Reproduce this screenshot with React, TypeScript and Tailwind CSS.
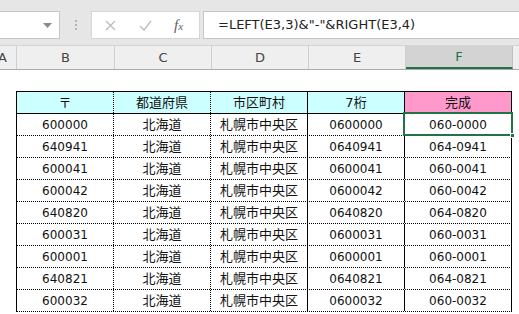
const ROWS: [string, string, string, string, string][] = [
  ["600000", "北海道", "札幌市中央区", "0600000", "060-0000"],
  ["640941", "北海道", "札幌市中央区", "0640941", "064-0941"],
  ["600041", "北海道", "札幌市中央区", "0600041", "060-0041"],
  ["600042", "北海道", "札幌市中央区", "0600042", "060-0042"],
  ["640820", "北海道", "札幌市中央区", "0640820", "064-0820"],
  ["600031", "北海道", "札幌市中央区", "0600031", "060-0031"],
  ["600001", "北海道", "札幌市中央区", "0600001", "060-0001"],
  ["640821", "北海道", "札幌市中央区", "0640821", "064-0821"],
  ["600032", "北海道", "札幌市中央区", "0600032", "060-0032"],
];

const COLS = [
  { key: "B", w: "w-[98px]" },
  { key: "C", w: "w-[97px]" },
  { key: "D", w: "w-[97px]" },
  { key: "E", w: "w-[97px]" },
  { key: "F", w: "w-[107px]" },
];

// right border style per column (B|C and C|D are dotted, rest solid)
const RIGHT = [
  "border-r border-dotted border-r-black",
  "border-r border-dotted border-r-black",
  "border-r border-solid border-r-black",
  "border-r border-solid border-r-black",
  "border-r border-solid border-r-black",
];

const WIDTHS = ["w-[97px]", "w-[97px]", "w-[97px]", "w-[97px]", "w-[107px]"];

const isJa = (s: string) => /[^\x00-\x7f]/.test(s);

export default function App() {
  return (
    <div className="w-[519px] h-[314px] overflow-hidden bg-white font-['DejaVu_Sans','Noto_Sans_CJK_JP',sans-serif]">
      {/* formula bar */}
      <div className="h-[46px] bg-[#e6e6e6] flex items-start pt-[11px] border-b border-[#d4d4d4]">
        <div className="w-[60px] h-[28px] bg-white border border-[#c6c6c6] border-l-0 flex items-center justify-end pr-[7px]">
          <svg width="9" height="5" viewBox="0 0 9 5">
            <path d="M0 0h9L4.5 5z" fill="#8a8a8a" />
          </svg>
        </div>
        <div className="w-[31px] h-[28px] flex flex-col items-center justify-center gap-[2px]">
          <span className="w-[2px] h-[2px] bg-[#b4b4b4]" />
          <span className="w-[2px] h-[2px] bg-[#b4b4b4]" />
          <span className="w-[2px] h-[2px] bg-[#b4b4b4]" />
        </div>
        <div className="w-[109px] h-[28px] bg-white border border-[#d6d6d6] flex items-center">
          <svg className="ml-[13px]" width="11" height="11" viewBox="0 0 11 11">
            <path d="M1 1l9 9M10 1l-9 9" stroke="#bdbdbd" strokeWidth="1.4" />
          </svg>
          <svg className="ml-[23px]" width="13" height="11" viewBox="0 0 13 11">
            <path d="M1 6l4 4 7-9" stroke="#bdbdbd" strokeWidth="1.4" fill="none" />
          </svg>
          <span className="ml-[22px] text-[15px] italic text-[#5e5e5e] font-['Liberation_Serif',serif] leading-none">
            f<span className="text-[11px]">x</span>
          </span>
        </div>
        <div className="ml-[3px] flex-1 h-[28px] bg-white border border-[#c6c6c6] border-r-0 flex items-center pl-[14px] text-[13px] text-[#222]">
          =LEFT(E3,3)&amp;"-"&amp;RIGHT(E3,4)
        </div>
      </div>

      {/* column headers */}
      <div className="h-[24px] flex bg-[#efefef] border-b border-[#ababab] text-[13px] text-[#444]">
        <div className="w-[17px] border-r border-[#cfcfcf] flex items-center">
          <span className="-ml-[2px]">A</span>
        </div>
        {COLS.map((c) => (
          <div
            key={c.key}
            className={`${c.w} shrink-0 flex items-center justify-center border-r ${
              c.key === "F"
                ? "bg-[#d3d3d3] text-[#217346] border-[#c0c0c0] border-b-2 border-b-[#217346]"
                : "border-[#cfcfcf]"
            }`}
          >
            {c.key}
          </div>
        ))}
        <div className="flex-1" />
      </div>

      {/* sheet */}
      <div className="pt-[21px] pl-[16px]">
        <div className="border-l border-t border-black w-fit text-[12px] text-[#111]">
          <div className="flex h-[22px] border-b border-black">
            {["〒", "都道府県", "市区町村", "7桁", "完成"].map((h, i) => (
              <div
                key={h}
                className={`${WIDTHS[i]} shrink-0 flex items-center justify-center text-[13px] ${RIGHT[i]} ${
                  i === 4 ? "bg-[#ff99cc]" : "bg-[#ccffff]"
                }`}
              >
                {h}
              </div>
            ))}
          </div>
          {ROWS.map((r, ri) => (
            <div key={r[0]} className="flex h-[22px] border-b border-dotted border-black">
              {r.map((v, i) => (
                <div
                  key={i}
                  className={`${WIDTHS[i]} shrink-0 flex items-center justify-center ${RIGHT[i]} ${
                    isJa(v) ? "text-[13px]" : ""
                  } ${ri === 0 && i === 4 ? "relative" : ""}`}
                >
                  {v}
                  {ri === 0 && i === 4 && (
                    <>
                      <div className="absolute -left-[2px] -top-[2px] -right-[2px] -bottom-[1px] border-2 border-[#217346]" />
                      <div className="absolute -right-[4px] -bottom-[3px] w-[5px] h-[5px] bg-[#217346] border border-white" />
                    </>
                  )}
                </div>
              ))}
            </div>
          ))}
        </div>
      </div>
    </div>
  );
}
